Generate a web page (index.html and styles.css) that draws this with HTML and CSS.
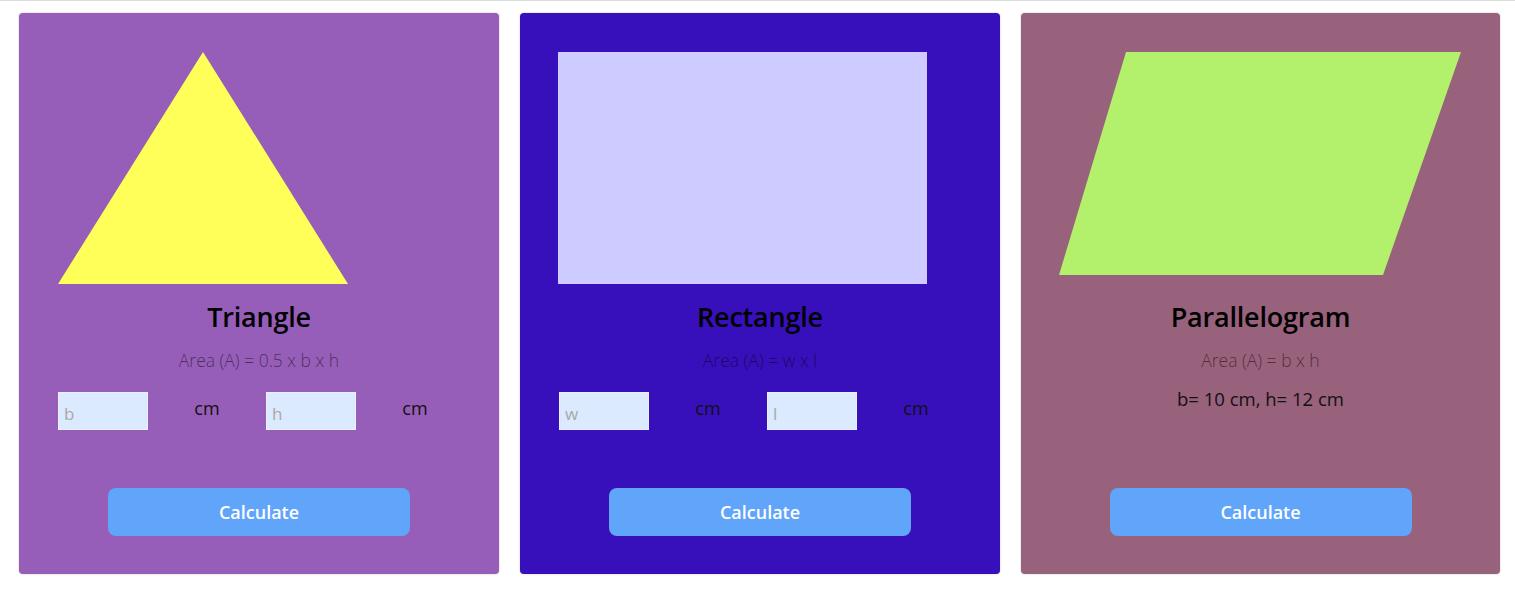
FILE: index.html
```html
<!DOCTYPE html>
<html lang="en">
<head>
<meta charset="utf-8">
<title>Area Calculator</title>
<link rel="stylesheet" href="styles.css">
</head>
<body>
<main class="cards">
  <section class="card card-triangle">
    <div class="shape">
      <svg width="402" height="232" viewBox="0 0 402 232"><polygon points="146,0 291,232 1,232" fill="#ffff5a"/></svg>
    </div>
    <h2 class="title">Triangle</h2>
    <p class="formula">Area (A) = 0.5 x b x h</p>
    <div class="inputs">
      <input class="field" type="text" placeholder="b">
      <span class="unit">cm</span>
      <input class="field" type="text" placeholder="h">
      <span class="unit">cm</span>
    </div>
    <button class="calc">Calculate</button>
  </section>
  <section class="card card-rectangle">
    <div class="shape">
      <svg width="402" height="232" viewBox="0 0 402 232"><rect x="0" y="0" width="369" height="232" fill="#cdcbff"/></svg>
    </div>
    <h2 class="title">Rectangle</h2>
    <p class="formula">Area (A) = w x l</p>
    <div class="inputs">
      <input class="field" type="text" placeholder="w">
      <span class="unit">cm</span>
      <input class="field" type="text" placeholder="l">
      <span class="unit">cm</span>
    </div>
    <button class="calc">Calculate</button>
  </section>
  <section class="card card-parallelogram">
    <div class="shape">
      <svg width="402" height="232" viewBox="0 0 402 232"><polygon points="67,0 402,0 324,223 0,223" fill="#b3f06c"/></svg>
    </div>
    <h2 class="title">Parallelogram</h2>
    <p class="formula">Area (A) = b x h</p>
    <p class="values">b= 10 cm, h= 12 cm</p>
    <button class="calc">Calculate</button>
  </section>
</main>
</body>
</html>
```

FILE: styles.css
```css
* { box-sizing: border-box; }

body {
  margin: 0;
  border-top: 1px solid #dcdcdc;
  background: #ffffff;
  font-family: "Open Sans", "Noto Sans", sans-serif;
}

.cards {
  display: flex;
  gap: 21px;
  padding: 12px 19px;
}

.card {
  width: 480px;
  height: 561px;
  border-radius: 4px;
  padding: 39px 39px 38px 39px;
  display: flex;
  flex-direction: column;
  align-items: center;
  box-shadow: 0 0 2px rgba(0, 0, 0, 0.25);
}

.card-triangle { background: #965eb8; }
.card-rectangle { background: #3710bb; }
.card-parallelogram { background: #98617c; }

.shape {
  width: 402px;
  height: 232px;
  align-self: flex-start;
  margin-left: -1px;
}

.shape svg { display: block; }

.title {
  margin: 16px 0 0;
  font-size: 27px;
  line-height: 34px;
  font-weight: 600;
  color: #000;
  letter-spacing: -0.2px;
}

.formula {
  margin: 13px 0 0;
  font-size: 17.5px;
  line-height: 26px;
  font-weight: 300;
  color: rgba(0, 0, 0, 0.5);
}

.values {
  margin: 13px 0 0;
  font-size: 18.5px;
  line-height: 26px;
  color: #111;
}

.inputs {
  margin-top: 19px;
  display: flex;
  align-items: center;
  align-self: flex-start;
}

.field {
  width: 90px;
  height: 38px;
  border: 1px solid rgba(255, 255, 255, 0.35);
  background: #dbeafe;
  padding: 4px 5px 0;
  font-family: inherit;
  font-size: 17px;
  color: #333;
  outline: none;
}

.field::placeholder { color: #a8a8a8; }

.unit {
  width: 118px;
  text-align: center;
  font-size: 18px;
  line-height: 24px;
  color: #111;
  margin-top: -6px;
}

.calc {
  margin-top: auto;
  width: 302px;
  height: 48px;
  border: none;
  border-radius: 8px;
  background: #60a5fa;
  color: #ffffff;
  font-family: inherit;
  font-size: 18px;
  font-weight: 600;
}
```
